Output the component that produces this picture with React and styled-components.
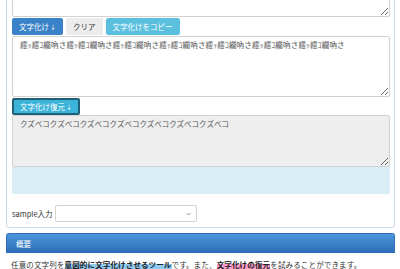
import React from "react";
import styled, { createGlobalStyle } from "styled-components";

const GlobalStyle = createGlobalStyle`
  html, body {
    margin: 0;
    padding: 0;
    background: #fff;
    overflow: hidden;
  }
  body {
    font-family: "Noto Sans CJK JP", "Noto Sans", sans-serif;
    font-size: 7.5px;
    color: #333;
  }
`;

const Page = styled.div`
  padding: 0 5px 0 6px;
`;

const Panel = styled.div`
  margin-top: -40px;
  border: 1px solid #c6dcee;
  border-radius: 3px;
  padding: 5px 4px 5px 5px;
  display: flex;
  flex-direction: column;
`;

const Area = styled.textarea`
  display: block;
  box-sizing: border-box;
  width: 100%;
  height: ${(p) => p.$h}px;
  margin: 0;
  padding: 3px 7px;
  border: 1px solid #d2d2d2;
  border-radius: 2px;
  background: ${(p) => (p.$gray ? "#eeeeee" : "#fff")};
  color: #555;
  font-family: inherit;
  font-size: 7.5px;
  letter-spacing: ${(p) => p.$ls || 0}px;
  line-height: 1.45;
  outline: none;
  resize: vertical;
`;

const ButtonRow = styled.div`
  display: flex;
  gap: 3px;
  margin: 1px 0 1px;
`;

const colors = {
  primary: { bg: "#3a82c7", fg: "#fff", bd: "#3a82c7" },
  plain: { bg: "#ececec", fg: "#333", bd: "#ececec" },
  info: { bg: "#5bc0de", fg: "#fff", bd: "#5bc0de" },
  active: { bg: "#3cb3d8", fg: "#fff", bd: "#1f5f78" },
};

const Btn = styled.button`
  box-sizing: border-box;
  height: 17px;
  display: inline-flex;
  align-items: center;
  padding: 0 6px;
  margin: 0;
  border: ${(p) => (p.$kind === "active" ? 2 : 1)}px solid
    ${(p) => colors[p.$kind].bd};
  border-radius: 2px;
  background: ${(p) => colors[p.$kind].bg};
  color: ${(p) => colors[p.$kind].fg};
  font-family: inherit;
  font-size: 7.5px;
  cursor: pointer;
`;

const Arrow = styled.span`
  font-size: 6px;
  margin-left: 1px;
`;

const RestoreRow = styled.div`
  display: flex;
  margin: 1px 0 0 0;
`;

const InfoBox = styled.div`
  height: 27px;
  background: #d9edf7;
  border-radius: 0 0 2px 2px;
`;

const SampleRow = styled.div`
  display: flex;
  align-items: center;
  gap: 2px;
  margin-top: 11px;
`;

const Label = styled.span`
  font-size: 7.5px;
  color: #333;
`;

const SelectWrap = styled.div`
  position: relative;
  width: 142px;
  height: 17px;
`;

const Select = styled.select`
  appearance: none;
  box-sizing: border-box;
  width: 100%;
  height: 100%;
  margin: 0;
  border: 1px solid #d2d2d2;
  border-radius: 2px;
  background: #fff;
  font-family: inherit;
  font-size: 7.5px;
`;

const Chevron = styled.svg`
  position: absolute;
  right: 6px;
  top: 7px;
  width: 5px;
  height: 4px;
  pointer-events: none;
`;

const InfoPanel = styled.div`
  margin-top: 5px;
  border: 1px solid #2f6fb7;
  border-bottom: none;
  border-radius: 3px 3px 0 0;
`;

const Heading = styled.div`
  height: 19px;
  display: flex;
  align-items: center;
  padding: 0 9px;
  background: linear-gradient(to bottom, #4c96dd 0%, #2c6db6 100%);
  color: #fff;
  font-size: 7.5px;
`;

const Body = styled.div`
  padding: 6px 5px;
  margin: 0 -1px;
  background: #fff;
  font-size: 7.5px;
  letter-spacing: 0.15px;
  line-height: 11px;
  color: #333;
`;

const Mark = styled.strong`
  font-weight: bold;
  color: #222;
  background: linear-gradient(transparent 45%, ${(p) => p.$c} 45%);
`;

const mojibake = "繧ｯ繧ｺ繝吶さ".repeat(7);
const restored = "クズベコ".repeat(7);

export default function App() {
  return (
    <Page>
      <GlobalStyle />
      <Panel>
        <Area $h={51} readOnly value="クズベコ" />
        <ButtonRow>
          <Btn $kind="primary">文字化け<Arrow>↓</Arrow></Btn>
          <Btn $kind="plain">クリア</Btn>
          <Btn $kind="info">文字化けをコピー</Btn>
        </ButtonRow>
        <Area $h={61} $ls={0.2} readOnly value={mojibake} />
        <RestoreRow>
          <Btn $kind="active">文字化け復元<Arrow>↓</Arrow></Btn>
        </RestoreRow>
        <Area $h={52} $gray readOnly value={restored} />
        <InfoBox />
        <SampleRow>
          <Label>sample入力</Label>
          <SelectWrap>
            <Select defaultValue="">
              <option value=""></option>
            </Select>
            <Chevron viewBox="0 0 10 8">
              <path d="M1 2 L5 6 L9 2" stroke="#777" strokeWidth="1.6" fill="none" />
            </Chevron>
          </SelectWrap>
        </SampleRow>
      </Panel>
      <InfoPanel>
        <Heading>概要</Heading>
        <Body>
          任意の文字列を<Mark $c="#8fcaf3">意図的に文字化けさせるツール</Mark>です。また、
          <Mark $c="#ff9ccb">文字化けの復元</Mark>を試みることができます。
        </Body>
      </InfoPanel>
    </Page>
  );
}
